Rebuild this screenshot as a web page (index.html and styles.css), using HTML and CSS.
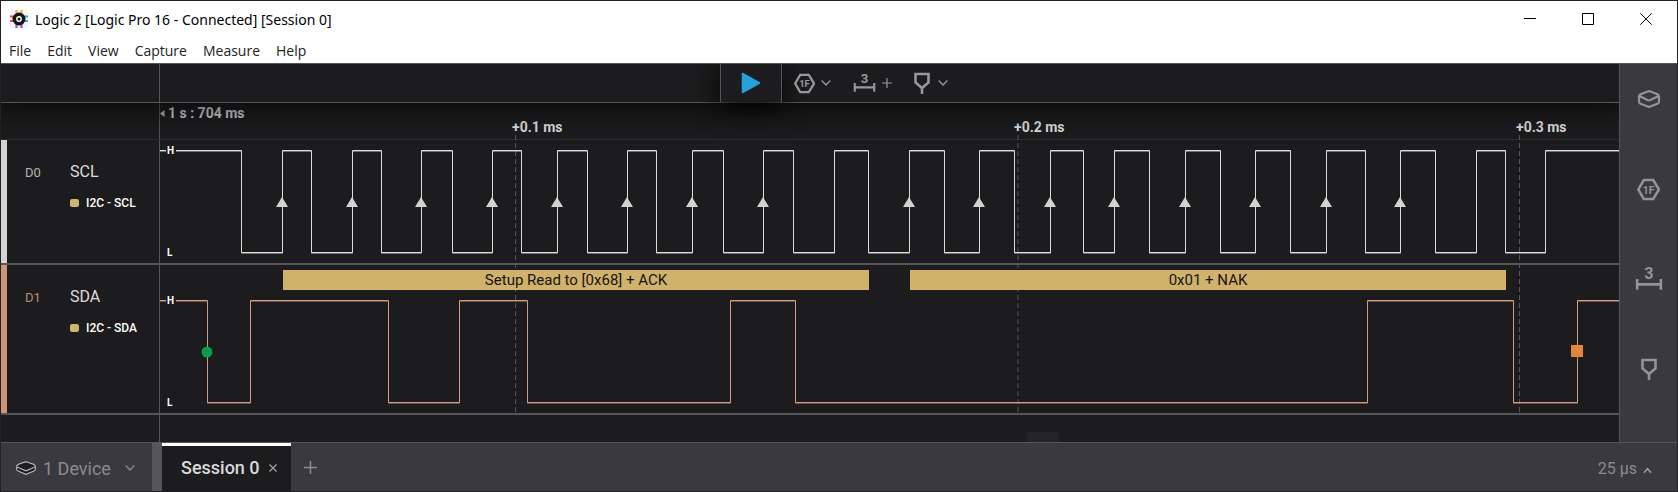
FILE: index.html
```
<!DOCTYPE html>
<html lang="en">
<head>
<meta charset="utf-8">
<title>Logic 2 [Logic Pro 16 - Connected] [Session 0]</title>
<link rel="stylesheet" href="styles.css">
</head>
<body>
<svg class="defs" aria-hidden="true">
  <symbol id="i-measure" viewBox="0 0 26 22"><path d="M2 11v10M24 11v10M2 16h22" fill="none" stroke="currentColor" stroke-width="2.400"/></symbol>
  <symbol id="i-hex" viewBox="0 0 22 22"><path d="M6.500 2h9L21 11l-5.500 9h-9L1.200 11z" fill="none" stroke="currentColor" stroke-width="2.400"/></symbol>
  <symbol id="i-marker" viewBox="0 0 16 22"><path d="M1.500 2h13v8.500L8 16l-6.500-5.500zM8 16v6" fill="none" stroke="currentColor" stroke-width="2.600"/></symbol>
  <symbol id="i-device" viewBox="0 0 24 20"><path d="M12 2 3.500 5.200Q2 6 2 7.500v5q0 1.500 1.500 2.200L12 18l8.500-3.300q1.500-.7 1.500-2.200v-5q0-1.500-1.500-2.300zM2.500 7l8 4q1.500.6 3 0l8-4" fill="none" stroke="currentColor" stroke-width="2.200" stroke-linejoin="round"/></symbol>
  <symbol id="i-down" viewBox="0 0 10 8"><path d="M.7 1.500 5 6l4.300-4.500" fill="none" stroke="currentColor" stroke-width="1.300"/></symbol>
  <symbol id="i-plus" viewBox="0 0 12 12"><path d="M6 0v12M0 6h12" fill="none" stroke="currentColor" stroke-width="1.400"/></symbol>
  <symbol id="edge" viewBox="0 0 12 10"><path d="M6 0l6 10H0z" fill="#d3d3d3"/></symbol>
</svg>
<div class="window">
  <header class="titlebar">
    <svg class="app-icon" viewBox="0 0 20 20" aria-hidden="true">
      <rect x=".5" y=".5" width="19" height="19" rx="4" fill="#f3f3f6"/>
      <path d="M7.500 1v4M12.500 1v4" stroke="#e9b43c" stroke-width="2.200"/>
      <path d="M7.500 15v4M12.500 15v4" stroke="#9a55c4" stroke-width="2.200"/>
      <path d="M1 7.500h4M1 12h4" stroke="#e2504f" stroke-width="2.200"/>
      <path d="M15 7.500h4M15 12h4" stroke="#3ea7d8" stroke-width="2.200"/>
      <circle cx="10" cy="10" r="4.700" fill="#fff" stroke="#17171b" stroke-width="3.600"/>
      <circle cx="10" cy="10" r="1.500" fill="#17171b"/>
    </svg>
    <h1 class="title">Logic 2 [Logic Pro 16 - Connected] [Session 0]</h1>
    <div class="win-buttons">
      <button class="win-btn" aria-label="Minimize"><svg viewBox="0 0 12 12"><path d="M0 5.500h12"/></svg></button>
      <button class="win-btn" aria-label="Maximize"><svg viewBox="0 0 12 12"><path d="M.5.5h11v11H.5z"/></svg></button>
      <button class="win-btn" aria-label="Close"><svg viewBox="0 0 12 12"><path d="M.3.3l11.400 11.400M11.700.3.3 11.700"/></svg></button>
    </div>
  </header>
  <nav class="menu">
    <button>File</button><button>Edit</button><button>View</button><button>Capture</button><button>Measure</button><button>Help</button>
  </nav>
  <div class="body">
    <main class="work">
      <div class="toolbar">
        <div class="side"></div>
        <div class="tools">
          <button class="play" aria-label="Start capture"><svg viewBox="0 0 20 22"><path d="M1.500 1.500v19L18.500 11z" fill="#27a1db" stroke="#27a1db" stroke-width="1.500" stroke-linejoin="round"/></svg></button>
          <button class="tool" aria-label="Analyzers"><svg class="ic-hex" viewBox="0 0 22 22"><use href="#i-hex"/><text x="11" y="15" class="hex-text">1F</text></svg><svg class="ic-down"><use href="#i-down"/></svg></button>
          <button class="tool" aria-label="Add measurement"><svg class="ic-tool-measure" viewBox="0 0 26 22"><use href="#i-measure"/><text x="13" y="11" class="measure-text">3</text></svg><svg class="ic-small-plus"><use href="#i-plus"/></svg></button>
          <button class="tool tool-marker" aria-label="Add marker"><svg class="ic-marker"><use href="#i-marker"/></svg><svg class="ic-down"><use href="#i-down"/></svg></button>
        </div>
      </div>
      <div class="ruler">
        <div class="side"></div>
        <svg class="canvas">
          <path d="M0 10.500 4.500 7v7z" fill="#b9b9bb"/>
          <text x="8" y="15" class="origin">1 s : 704 ms</text>
          <text x="352" y="29" class="tick">+0.1 ms</text>
          <text x="854" y="29" class="tick">+0.2 ms</text>
          <text x="1356" y="29" class="tick">+0.3 ms</text>
        </svg>
      </div>
      <div class="tracks">
        <svg class="grid-lines"><path d="M355.500 0V278M858 0V278M1359.500 0V278"/></svg>
        <section class="track track-scl">
          <div class="side">
            <span class="bar"></span><span class="chan">D0</span>
            <div class="info"><div class="name">SCL</div><div class="analyzer"><i></i>I2C - SCL</div></div>
          </div>
          <svg class="canvas">
            <defs><path id="scl" d="M0 10.500H81.500V112.500H122.500V10.500H151.500V112.500H192.500V10.500H221.500V112.500H261.500V10.500H292.500V112.500H332.500V10.500H361.500V112.500H397.500V10.500H427.500V112.500H467.500V10.500H496.500V112.500H532.500V10.500H563.500V112.500H603.500V10.500H633.500V112.500H674.500V10.500H708.500V112.500H749.500V10.500H784.500V112.500H819.500V10.500H854.500V112.500H890.500V10.500H923.500V112.500H954.500V10.500H989.500V112.500H1025.500V10.500H1060.500V112.500H1095.500V10.500H1130.500V112.500H1166.500V10.500H1205.500V112.500H1240.500V10.500H1275.500V112.500H1316.500V10.500H1345.500V112.500H1385.500V10.500H4000"/></defs>
            <use href="#scl" y="1" class="wave scl dim"/><use href="#scl" class="wave scl"/>
            <g>
              <use href="#edge" x="116" y="57" width="12" height="10"/><use href="#edge" x="186" y="57" width="12" height="10"/>
              <use href="#edge" x="255" y="57" width="12" height="10"/><use href="#edge" x="326" y="57" width="12" height="10"/>
              <use href="#edge" x="391" y="57" width="12" height="10"/><use href="#edge" x="461" y="57" width="12" height="10"/>
              <use href="#edge" x="526" y="57" width="12" height="10"/><use href="#edge" x="597" y="57" width="12" height="10"/>
              <use href="#edge" x="743" y="57" width="12" height="10"/><use href="#edge" x="813" y="57" width="12" height="10"/>
              <use href="#edge" x="884" y="57" width="12" height="10"/><use href="#edge" x="948" y="57" width="12" height="10"/>
              <use href="#edge" x="1019" y="57" width="12" height="10"/><use href="#edge" x="1089" y="57" width="12" height="10"/>
              <use href="#edge" x="1160" y="57" width="12" height="10"/><use href="#edge" x="1234" y="57" width="12" height="10"/>
            </g>
            <rect x="6" y="8" width="10" height="6" class="gap"/>
            <text x="7" y="14" class="level">H</text><text x="7" y="116" class="level">L</text>
          </svg>
        </section>
        <section class="track track-sda">
          <div class="side">
            <span class="bar"></span><span class="chan">D1</span>
            <div class="info"><div class="name">SDA</div><div class="analyzer"><i></i>I2C - SDA</div></div>
          </div>
          <svg class="canvas">
            <defs><path id="sda" d="M0 35.500H47.500V137.500H90.500V35.500H228.500V137.500H299.500V35.500H367.500V137.500H570.500V35.500H635.500V137.500H1207.500V35.500H1353.500V137.500H1417.500V35.500H4000"/></defs>
            <use href="#sda" y="1" class="wave sda dim"/><use href="#sda" class="wave sda"/>
            <circle cx="47" cy="87" r="5.500" fill="#0a9a50"/>
            <rect x="1411" y="80" width="12" height="12" fill="#e5853a"/>
            <rect x="123" y="5" width="586" height="20" class="frame"/><text x="416" y="20" class="frame-text">Setup Read to [0x68] + ACK</text>
            <rect x="750" y="5" width="596" height="20" class="frame"/><text x="1048" y="20" class="frame-text">0x01 + NAK</text>
            <rect x="6" y="33" width="10" height="6" class="gap"/>
            <text x="7" y="39" class="level">H</text><text x="7" y="141" class="level">L</text>
          </svg>
        </section>
      </div>
      <div class="scroller">
        <div class="side"></div>
        <div class="scroll-track"><div class="thumb" style="margin-left:59.4%"></div></div>
      </div>
    </main>
    <aside class="sidebar">
      <button aria-label="Device settings"><svg class="ic-device"><use href="#i-device"/></svg></button>
      <button aria-label="Analyzers"><svg class="ic-hex-lg" viewBox="0 0 22 22"><use href="#i-hex"/><text x="11" y="15" class="hex-text">1F</text></svg></button>
      <button aria-label="Measurements"><svg class="ic-measure" viewBox="0 0 26 22"><use href="#i-measure"/><text x="13" y="11" class="measure-text">3</text></svg></button>
      <button aria-label="Timing markers"><svg class="ic-marker"><use href="#i-marker"/></svg></button>
    </aside>
  </div>
  <footer class="footer">
    <button class="device">
      <svg class="ic-dev" viewBox="0 0 20 14"><path d="M10 .7 19.300 5v4L10 13.300.7 9V5z" fill="#1c1c1e"/><path d="M10 .7 17.500 3.200Q19.300 4.200 19.300 5.500v3q0 1-1.800 1.800L10 13.300 2.500 10.300Q.7 9.500.7 8.500v-3Q.7 4.200 2.500 3.200zM1 6l9 3.800L19 6" fill="none" stroke="#b9b9bc" stroke-width="1.100"/></svg>
      <span>1 Device</span><svg class="ic-down"><use href="#i-down"/></svg>
    </button>
    <div class="tab"><button class="tab-name">Session 0</button><button class="tab-close" aria-label="Close session"><svg viewBox="0 0 8 8"><path d="M.5.5l7 7M7.500.5l-7 7"/></svg></button></div>
    <button class="add" aria-label="New session"><svg class="ic-plus"><use href="#i-plus"/></svg></button>
    <button class="scale"><span>25 µs</span><svg viewBox="0 0 10 7"><path d="M1 6l4-4.500L9 6"/></svg></button>
  </footer>
</div>
</body>
</html>
```
FILE: styles.css
```
:root { --side: 159px; --sidebar: 58px; --line: #56565a; --dark: #1c1c1e; --panel: #3a393d; }
* { box-sizing: border-box; }
body { margin: 0; background: #242022; font-family: Roboto, sans-serif; }
button { border: 0; padding: 0; background: none; color: inherit; font: inherit; }
.defs { position: absolute; width: 0; height: 0; }
.window { display: flex; flex-direction: column; min-height: 100vh; border: 1px solid #242022; }

.titlebar { display: flex; align-items: center; height: 36px; padding-left: 8px; background: #fff; color: #000; font-family: "Noto Sans", sans-serif; }
.app-icon { width: 20px; height: 20px; margin-right: 6px; }
.title { flex: 1; margin: 0; font-size: 14px; font-weight: 400; }
.win-buttons { display: flex; padding-right: 2px; }
.win-btn { display: flex; align-items: center; justify-content: center; width: 58px; height: 36px; }
.win-btn svg { width: 12px; height: 12px; fill: none; stroke: #000; stroke-width: 1; }
.menu { display: flex; height: 26px; background: #fff; color: #222; font-family: "Open Sans", sans-serif; font-size: 14px; }
.menu button { padding: 0 8px; }

.body { display: flex; flex: 1; border-top: 1px solid var(--line); }
.work { display: flex; flex: 1; flex-direction: column; min-width: 0; overflow: hidden; background: var(--dark); }
.side { display: flex; flex: none; width: var(--side); border-right: 1px solid var(--line); }
.canvas { flex: 1; min-width: 0; height: 100%; overflow: hidden; }

.toolbar { position: relative; z-index: 2; display: flex; height: 39px; border-bottom: 1px solid var(--line); background: var(--dark); box-shadow: 0 0 28px 8px rgba(0, 0, 0, .6); }
.tools { display: flex; flex: 1; justify-content: center; padding-right: calc(var(--side) - var(--sidebar)); color: #98989b; }
.play { display: flex; align-items: center; justify-content: center; width: 62px; border: solid var(--line); border-width: 0 1px; background: var(--dark); box-shadow: 0 4px 28px #000; }
.play svg { width: 20px; height: 22px; }
.tool { display: flex; align-items: center; gap: 6px; position: relative; padding: 0 10px 0 12px; }
.tool-marker { gap: 8px; }
.tool svg { flex: none; }
.ic-hex { width: 21px; height: 21px; }
.ic-hex-lg { width: 23px; height: 23px; }
.ic-down { width: 10px; height: 8px; }
.ic-small-plus { width: 10px; height: 10px; }
.ic-tool-measure { width: 23px; height: 22px; overflow: visible; }
.ic-measure { width: 28px; height: 24px; overflow: visible; }
.ic-marker { width: 16px; height: 22px; }
.ic-device { width: 26px; height: 20px; }
.hex-text { font: 700 10px Roboto, sans-serif; text-anchor: middle; fill: currentColor; }
.measure-text { font: 700 15px Roboto, sans-serif; text-anchor: middle; fill: currentColor; }

.ruler { display: flex; height: 37px; border-bottom: 1px solid #2d2d30; }
.tick { font: 700 14px Roboto, sans-serif; fill: #dcdcdc; }
.origin { font: 700 14px Roboto, sans-serif; fill: #d0d0d2; }

.tracks { position: relative; }
.grid-lines { position: absolute; top: -5px; left: var(--side); width: calc(100% - var(--side)); height: 278px; fill: none; stroke: #55555a; stroke-dasharray: 5 3; }
.track { position: relative; display: flex; border-bottom: 2px solid var(--line); }
.track-scl { height: 125px; }
.track-sda { height: 150px; }
.bar { width: 6px; background: #d6d3d4; }
.track-sda .bar { background: #cb967c; }
.chan { width: 45px; padding: 25px 0 0 18px; color: #b8b5b5; font-size: 13px; line-height: 16px; }
.track-sda .chan { color: #c08a70; }
.info { padding: 20px 0 0 18px; }
.name { color: #dcdcdc; font-size: 16px; line-height: 24px; }
.analyzer { display: flex; align-items: center; gap: 7px; margin-top: 11px; color: #fff; font-size: 12px; font-weight: 500; line-height: 16px; }
.analyzer i { width: 9px; height: 8px; border-radius: 2px; background: #d0b56f; }
.wave { fill: none; stroke-width: 1; }
.scl { stroke: #dcdcdc; }
.sda { stroke: #cf9d82; }
.dim { opacity: .45; }
.gap { fill: var(--dark); }
.level { font: 700 10px Roboto, sans-serif; fill: #fff; }
.frame { fill: #d0b26c; }
.frame-text { font: 400 15px Roboto, sans-serif; text-anchor: middle; fill: #15130d; }

.scroller { display: flex; flex: 1; min-height: 27px; }
.scroll-track { display: flex; flex: 1; align-items: flex-end; }
.thumb { width: 32px; height: 10px; background: #242426; }

.sidebar { position: relative; display: flex; flex: none; flex-direction: column; align-items: center; gap: 60px; width: var(--sidebar); padding-top: 20px; border-left: 1px solid var(--line); background: var(--panel); color: #949498; }
.sidebar button { display: flex; align-items: center; justify-content: center; width: 40px; height: 30px; }

.footer { display: flex; height: 49px; border-top: 1px solid var(--line); background: var(--panel); color: #8b8b8f; }
.device { display: flex; align-items: center; gap: 7px; width: 161px; padding: 2px 0 0 15px; border-right: 10px solid #55555c; font-size: 18px; }
.device .ic-down { margin-left: 7px; }
.ic-dev { width: 20px; height: 14px; }
.tab { display: flex; align-items: center; gap: 9px; padding: 0 14px 2px 19px; border-top: 3px solid #fff; background: var(--dark); color: #dadada; }
.tab-name { font-size: 18px; font-weight: 500; }
.tab-close { display: flex; }
.tab-close svg { width: 8px; height: 8px; stroke: #a0a0a3; stroke-width: 1.3; }
.add { display: flex; align-items: center; padding: 0 13px; }
.ic-plus { width: 13px; height: 13px; }
.scale { display: flex; align-items: center; gap: 6px; margin-left: auto; padding: 2px 25px 0 0; font-size: 16px; }
.scale svg { width: 9px; height: 7px; margin-top: 4px; fill: none; stroke: #a0a0a3; stroke-width: 1.6; }
```
